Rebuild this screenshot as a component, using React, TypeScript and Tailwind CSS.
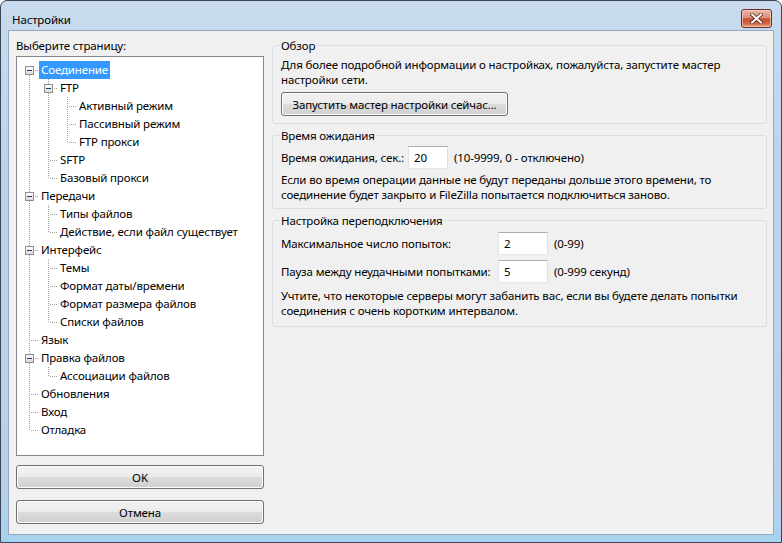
import React from 'react';

interface TreeNode {
  label: string;
  children?: TreeNode[];
}

interface TreeRow {
  label: string;
  guides: boolean[];
  up: boolean;
  down: boolean;
  expandable: boolean;
}

const pages: TreeNode[] = [
  {
    label: 'Соединение',
    children: [
      {
        label: 'FTP',
        children: [
          { label: 'Активный режим' },
          { label: 'Пассивный режим' },
          { label: 'FTP прокси' },
        ],
      },
      { label: 'SFTP' },
      { label: 'Базовый прокси' },
    ],
  },
  {
    label: 'Передачи',
    children: [
      { label: 'Типы файлов' },
      { label: 'Действие, если файл существует' },
    ],
  },
  {
    label: 'Интерфейс',
    children: [
      { label: 'Темы' },
      { label: 'Формат даты/времени' },
      { label: 'Формат размера файлов' },
      { label: 'Списки файлов' },
    ],
  },
  { label: 'Язык' },
  { label: 'Правка файлов', children: [{ label: 'Ассоциации файлов' }] },
  { label: 'Обновления' },
  { label: 'Вход' },
  { label: 'Отладка' },
];

// flatten the tree into rows, remembering which ancestor lines continue
const flatten = (nodes: TreeNode[], guides: boolean[], isRoot: boolean): TreeRow[] => {
  const rows: TreeRow[] = [];
  nodes.forEach((node, i) => {
    const last = i === nodes.length - 1;
    rows.push({
      label: node.label,
      guides,
      up: !(isRoot && i === 0),
      down: !last,
      expandable: !!node.children,
    });
    if (node.children) {
      rows.push(...flatten(node.children, [...guides, !last], false));
    }
  });
  return rows;
};

const rows = flatten(pages, [], true);

const dot = { stroke: '#a0a0a0', strokeWidth: 1, strokeDasharray: '1 1' };

const Guide = ({ on }: { on: boolean }) => (
  <svg width="19" height="18" className="shrink-0">
    {on && <line x1="9.5" y1="0" x2="9.5" y2="18" {...dot} />}
  </svg>
);

const Connector = ({ up, down, box }: { up: boolean; down: boolean; box: boolean }) => (
  <svg width="19" height="18" className="shrink-0">
    {up && <line x1="9.5" y1="0" x2="9.5" y2="10" {...dot} />}
    {down && <line x1="9.5" y1="10" x2="9.5" y2="18" {...dot} />}
    <line x1="11" y1="9.5" x2="19" y2="9.5" {...dot} />
    {box && (
      <>
        <defs>
          <linearGradient id="bx" x1="0" y1="0" x2="0" y2="1">
            <stop offset="0" stopColor="#ffffff" />
            <stop offset="1" stopColor="#d8d8d8" />
          </linearGradient>
        </defs>
        <rect x="5.5" y="5.5" width="8" height="8" fill="url(#bx)" stroke="#8f8f8f" />
        <line x1="7" y1="9.5" x2="12" y2="9.5" stroke="#1a3c6e" />
      </>
    )}
  </svg>
);

const btn =
  'flex items-center justify-center h-[24px] rounded-[3px] border border-[#707070] bg-[linear-gradient(to_bottom,#f2f2f2_0%,#ebebeb_50%,#dddddd_50%,#cfcfcf_100%)] shadow-[inset_0_0_0_1px_#fcfcfc]';

const field =
  'h-[23px] bg-white border border-t-[#abadb3] border-l-[#e2e3ea] border-r-[#dbdfe6] border-b-[#e3e9ef] pl-[5px] leading-[21px] outline-none';

const group = 'min-w-0 border border-[#d5dfe5] rounded-[3px] px-[8px]';

const App: React.FC = () => {
  return (
    <div
      className="w-[782px] h-[543px] flex flex-col rounded-t-[7px] border border-[#3a4656] bg-[linear-gradient(to_bottom,#c9dbee_0%,#bed3ea_30%,#b9d0e9_90%,#a6d3ef_100%)] overflow-hidden text-[11.5px] tracking-[-0.15px] leading-[15px] text-black"
      style={{ fontFamily: '"Segoe UI", "Noto Sans", sans-serif' }}
    >
      {/* Title bar */}
      <div className="h-[29px] flex items-start justify-between shrink-0">
        <span className="pl-[11px] pt-[11px]">Настройки</span>
        <div className="mt-[8px] mr-[9px] w-[31px] h-[19px] rounded-[3px] border border-[#6b2f26] bg-[linear-gradient(to_bottom,#ebb8ab_0%,#dc8e7b_45%,#c5502f_52%,#d0603e_75%,#e8a070_100%)] shadow-[inset_0_0_0_1px_rgba(255,220,210,0.6)] flex items-center justify-center">
          <svg width="13" height="11" viewBox="0 0 13 11">
            <path d="M2 1.5 L11 9.5 M11 1.5 L2 9.5" stroke="#5a2418" strokeWidth="3.6" strokeLinecap="square" />
            <path d="M2 1.5 L11 9.5 M11 1.5 L2 9.5" stroke="#ffffff" strokeWidth="2" strokeLinecap="square" />
          </svg>
        </div>
      </div>

      {/* Client area */}
      <div className="flex-1 mx-[7px] mb-[7px] border border-[#95a9c2] bg-[#f0f0f0] flex gap-[8px] pl-[7px] pr-[6px] pt-[7px]">
        {/* Page list */}
        <div className="w-[248px] flex flex-col shrink-0">
          <div className="h-[15px] mb-[3px]">Выберите страницу:</div>
          <div className="h-[400px] bg-white border border-[#828790] pl-[3px] pt-[4px] overflow-hidden">
            {rows.map((row, i) => (
              <div key={i} className="flex h-[18px] items-stretch whitespace-nowrap">
                {row.guides.map((g, j) => (
                  <Guide key={j} on={g} />
                ))}
                <Connector up={row.up} down={row.down} box={row.expandable} />
                <span
                  className={
                    i === 0
                      ? 'px-[2px] leading-[18px] bg-[#3399ff] text-white'
                      : 'px-[2px] leading-[18px]'
                  }
                >
                  {row.label}
                </span>
              </div>
            ))}
          </div>
          <div className={`${btn} mt-[9px]`}>OK</div>
          <div className={`${btn} mt-[11px]`}>Отмена</div>
        </div>

        {/* Settings page */}
        <div className="flex-1 min-w-0 flex flex-col">
          <fieldset className={`${group} pb-[7px]`}>
            <legend className="px-[1px] -ml-[1px] h-[15px]">Обзор</legend>
            <div className="pt-[4px] whitespace-nowrap">
              Для более подробной информации о настройках, пожалуйста, запустите мастер
              <br />
              настройки сети.
            </div>
            <div className={`${btn} w-[227px] mt-[5px]`}>Запустить мастер настройки сейчас...</div>
          </fieldset>

          <fieldset className={`${group} pb-[6px] mt-[4px]`}>
            <legend className="px-[1px] -ml-[1px] h-[15px]">Время ожидания</legend>
            <div className="flex items-center pt-[3px]">
              <span className="w-[127px] whitespace-nowrap">Время ожидания, сек.:</span>
              <input readOnly value="20" className={`${field} w-[40px]`} />
              <span className="ml-[6px] whitespace-nowrap">(10-9999, 0 - отключено)</span>
            </div>
            <div className="mt-[3px] whitespace-nowrap">
              Если во время операции данные не будут переданы дольше этого времени, то
              <br />
              соединение будет закрыто и FileZilla попытается подключиться заново.
            </div>
          </fieldset>

          <fieldset className={`${group} pb-[8px] mt-[4px]`}>
            <legend className="px-[1px] -ml-[1px] h-[15px]">Настройка переподключения</legend>
            <div className="flex items-center pt-[4px]">
              <span className="w-[217px] whitespace-nowrap">Максимальное число попыток:</span>
              <input readOnly value="2" className={`${field} w-[50px]`} />
              <span className="ml-[6px]">(0-99)</span>
            </div>
            <div className="flex items-center mt-[5px]">
              <span className="w-[217px] whitespace-nowrap">Пауза между неудачными попытками:</span>
              <input readOnly value="5" className={`${field} w-[50px]`} />
              <span className="ml-[6px] whitespace-nowrap">(0-999 секунд)</span>
            </div>
            <div className="mt-[5px] whitespace-nowrap">
              Учтите, что некоторые серверы могут забанить вас, если вы будете делать попытки
              <br />
              соединения с очень коротким интервалом.
            </div>
          </fieldset>
        </div>
      </div>
    </div>
  );
};

export default App;
